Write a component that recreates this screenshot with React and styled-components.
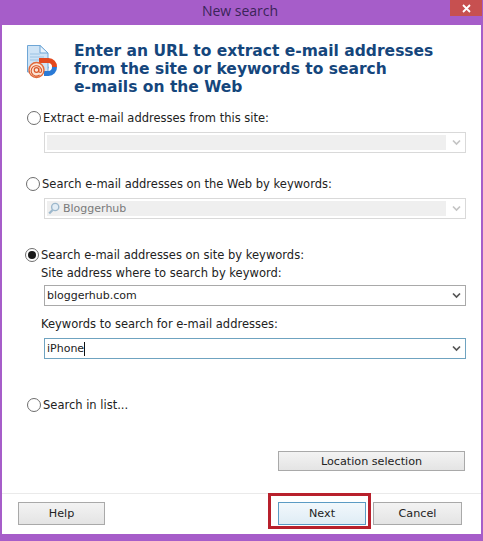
import React from "react";
import styled, { createGlobalStyle } from "styled-components";

const Global = createGlobalStyle`
  html, body { margin: 0; padding: 0; background: #a65dc9; }
  * { box-sizing: border-box; }
`;
const Win = styled.div`
  width: 483px; height: 541px; background: #a65dc9; display: flex; flex-direction: column;
  font-family: "DejaVu Sans", Verdana, sans-serif; font-size: 11.5px; color: #222; overflow: hidden;
`;
const TitleBar = styled.div`
  height: 25px; flex: none; display: flex; align-items: center; justify-content: center; position: relative;
  font-size: 14px; color: #3a2458; padding: 0 3px 4px 0;
  font-family: "Open Sans", "Noto Sans", sans-serif;
`;
const Close = styled.div`
  position: absolute; right: 1px; top: 0; width: 32px; height: 16px; background: #c75050;
  display: flex; align-items: center; justify-content: center;
`;
const Panel = styled.div`
  flex: none; height: 509px; margin: 0 2px; background: #fff; display: flex; flex-direction: column;
`;
const Content = styled.div`
  flex: 1; display: flex; flex-direction: column; padding: 16px 16px 0 23px;
`;
const Header = styled.div`
  display: flex; gap: 15px; height: 67px; padding-left: 2px;
`;
const Heading = styled.h1`
  margin: 0; font-size: 15.5px; line-height: 18px; font-weight: 700; color: #15467c; white-space: nowrap; padding-top: 1px;
`;
const IconBox = styled.div`
  width: 32px; padding-top: 4px; flex: none;
`;
const RadioRow = styled.div`
  display: flex; align-items: center; gap: 2px; height: 16px; margin-top: ${p => p.$top}px; margin-left: ${p => p.$left || 0}px;
`;
const RadioDot = styled.span`
  width: 14px; height: 14px; border-radius: 50%; border: 1px solid #6e6e6e; background: #fff; flex: none;
  display: flex; align-items: center; justify-content: center;
  &::after { content: ""; width: 8px; height: 8px; border-radius: 50%; background: ${p => p.$on ? "#1a1a1a" : "transparent"}; }
`;
const Combo = styled.div`
  height: 21px; margin-top: ${p => p.$top}px; margin-left: 19px; width: 422px; display: flex; align-items: center; position: relative;
  font-size: 11px;
  border: 1px solid ${p => p.$focus ? "#6fa3c0" : p.$off ? "#d9d9d9" : "#a9a9a9"};
  padding: ${p => p.$off ? "2px" : "0 2px"};
  color: ${p => p.$off ? "#7a7a7a" : "#222"};
`;
const ComboField = styled.div`
  flex: none; width: 399px; height: 15px; background: #efefef; display: flex; align-items: center; gap: 3px; padding-left: 1px;
`;
const ComboText = styled.span`
  flex: 1; display: flex; align-items: center;
`;
const Caret = styled.span`
  width: 1px; height: 14px; background: #111;
`;
const Chevron = styled.svg`
  position: absolute; right: 4px; top: 6px; width: 9px; height: 7px;
`;
const Label = styled.div`
  height: 16px; line-height: 16px; margin-left: 16px; margin-top: ${p => p.$top}px;
`;
const BottomRight = styled.div`
  display: flex; justify-content: flex-end; margin-top: auto; margin-bottom: 22px;
`;
const Btn = styled.button`
  font: inherit; font-size: 11.2px; color: #222; padding: 0; margin: 0; cursor: default;
  width: ${p => p.$w}px; height: ${p => p.$h}px;
  border: 1px solid ${p => p.$primary ? "#5b9bc4" : "#a9a9a9"};
  background: ${p => p.$primary ? "linear-gradient(#f2f8fc,#dfecf5)" : "linear-gradient(#f3f3f3,#e4e4e4)"};
`;
const Footer = styled.div`
  flex: none; height: 41px; border-top: 1px solid #eaeaea; display: flex; align-items: flex-start; gap: 7px; padding: 8px 19px 0 16px;
`;
const Spacer = styled.div` flex: 1; `;
const Highlighted = styled.div`
  position: relative; display: flex;
  &::after { content: ""; position: absolute; top: -9px; left: -10px; right: -5px; bottom: -4px; border: 3px solid #b8202c; pointer-events: none; }
`;

const MailIcon = () => (
  <svg width="32" height="34" viewBox="0 0 32 34">
    <path d="M0.5 0.5H13L21 8V27H0.5Z" fill="#cfe4f6" stroke="#6ea6d6" />
    <path d="M13 0.5V8H21Z" fill="#eaf4fc" stroke="#6ea6d6" />
    <path d="M3 9H13M3 12H17M3 15H12" stroke="#9cc3e4" />
    <path d="M14 21H21V24H21a3 3 0 0 0 0-3ZM30 22a8.5 8.5 0 0 1-8.5 9H17V26H21.5a3.5 3.5 0 0 0 3.5-4Z" fill="#2a7ad6" />
    <path d="M12 13H21.5a8.5 8.5 0 0 1 8.5 9H25a3.5 3.5 0 0 0-3.5-4H12Z" fill="#e2491f" />
    <circle cx="9.5" cy="25" r="7.5" fill="#fbe4d4" stroke="#e0693a" strokeWidth="1.4" />
    <circle cx="9.5" cy="25" r="2.3" fill="none" stroke="#d9562a" strokeWidth="1.2" />
    <path d="M11.8 23v3a1.4 1.4 0 0 0 2.8 0 5.2 5.2 0 1 0-2 4" fill="none" stroke="#d9562a" strokeWidth="1.1" />
  </svg>
);
const Down = ({ off }) => (
  <Chevron viewBox="0 0 9 7">
    <path d="M1 1.5 4.5 5 8 1.5" fill="none" stroke={off ? "#c4c4c4" : "#555"} strokeWidth="1.7" />
  </Chevron>
);
const Loupe = () => (
  <svg width="12" height="13" viewBox="0 0 12 13">
    <circle cx="7.2" cy="5" r="3.6" fill="#e3edf5" stroke="#9db8cc" strokeWidth="1.4" />
    <path d="M4.6 8 1.2 11.6" stroke="#9db8cc" strokeWidth="2.2" />
  </svg>
);

export default function App() {
  return (
    <Win>
      <Global />
      <TitleBar>
        New search
        <Close>
          <svg width="9" height="9" viewBox="0 0 9 9"><path d="M1 1 8 8M8 1 1 8" stroke="#fff" strokeWidth="1.8" /></svg>
        </Close>
      </TitleBar>
      <Panel>
        <Content>
          <Header>
            <IconBox><MailIcon /></IconBox>
            <Heading>Enter an URL to extract e-mail addresses<br />from the site or keywords to search<br />e-mails on the Web</Heading>
          </Header>
          <RadioRow $top={2} $left={2}><RadioDot />Extract e-mail addresses from this site:</RadioRow>
          <Combo $off $top={6}><ComboField /><Down off /></Combo>
          <RadioRow $top={23} $left={1}><RadioDot />Search e-mail addresses on the Web by keywords:</RadioRow>
          <Combo $off $top={6}><ComboField><Loupe />Bloggerhub</ComboField><Down off /></Combo>
          <RadioRow $top={28} $left={0}><RadioDot $on />Search e-mail addresses on site by keywords:</RadioRow>
          <Label $top={2}>Site address where to search by keyword:</Label>
          <Combo $top={4}><ComboText>bloggerhub.com</ComboText><Down /></Combo>
          <Label $top={10}>Keywords to search for e-mail addresses:</Label>
          <Combo $focus $top={6}><ComboText>iPhone<Caret /></ComboText><Down /></Combo>
          <RadioRow $top={38} $left={2}><RadioDot />Search in list...</RadioRow>
          <BottomRight><Btn $w={187} $h={20}>Location selection</Btn></BottomRight>
        </Content>
        <Footer>
          <Btn $w={87} $h={23}>Help</Btn>
          <Spacer />
          <Highlighted><Btn $primary $w={88} $h={23}>Next</Btn></Highlighted>
          <Btn $w={89} $h={23}>Cancel</Btn>
        </Footer>
      </Panel>
    </Win>
  );
}
